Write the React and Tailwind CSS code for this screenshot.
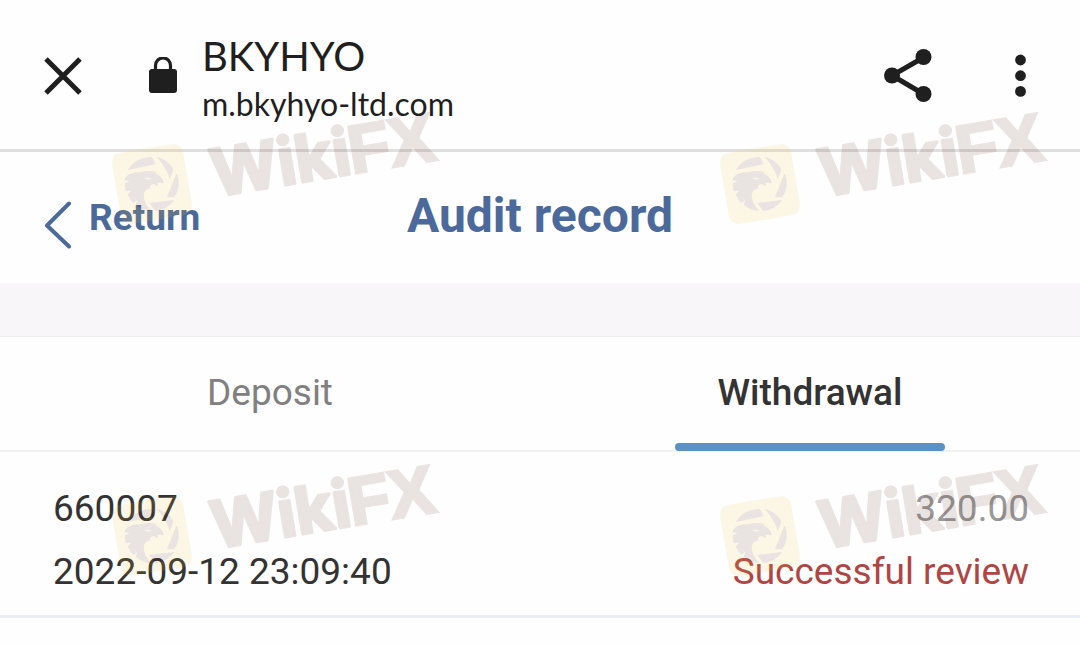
import React, { useState } from "react";

const tabs = [
  { id: "deposit", label: "Deposit" },
  { id: "withdrawal", label: "Withdrawal" },
];

const records = [
  {
    id: "660007",
    time: "2022-09-12 23:09:40",
    amount: "320.00",
    status: "Successful review",
  },
];

const stamps = [
  { x: 152, y: 184 },
  { x: 760, y: 184 },
  { x: 152, y: 536 },
  { x: 760, y: 536 },
];

const CloseIcon = () => (
  <svg viewBox="0 0 38 38" className="h-[38px] w-[38px]" fill="none" stroke="#1f1f1f" strokeWidth="5">
    <path d="M2 2 36 36M36 2 2 36" />
  </svg>
);

const LockIcon = () => (
  <svg viewBox="0 0 30 38" className="h-[38px] w-[30px]">
    <rect x="1" y="12" width="28" height="24" rx="3" fill="#1f1f1f" />
    <path d="M7.500 14V8.500a7.500 7.500 0 0 1 15 0v5.500" fill="none" stroke="#1f1f1f" strokeWidth="3.200" />
  </svg>
);

const ShareIcon = () => (
  <svg viewBox="0 0 48 54" className="h-[54px] w-12" fill="#1f1f1f">
    <path d="M39.500 8.500 8 26.500l31.500 18.500" fill="none" stroke="#1f1f1f" strokeWidth="5" />
    <circle cx="39.500" cy="8" r="8" />
    <circle cx="8" cy="26.500" r="8" />
    <circle cx="39.500" cy="45" r="8" />
  </svg>
);

const MoreIcon = () => (
  <svg viewBox="0 0 12 44" className="h-11 w-3" fill="#1f1f1f">
    <circle cx="6.500" cy="6" r="5.400" />
    <circle cx="6.500" cy="21.700" r="5.400" />
    <circle cx="6.500" cy="37.400" r="5.400" />
  </svg>
);

const BackIcon = () => (
  <svg viewBox="0 0 28 48" className="h-12 w-7" fill="none" stroke="#4b6a9b" strokeWidth="4" strokeLinecap="round" strokeLinejoin="round">
    <path d="M25 2.500 3 24.500l22 21" />
  </svg>
);

// Badge + name, drawn around the centre of the badge
const Stamp = ({ x, y }) => (
  <g transform={`translate(${x} ${y})`} opacity="0.12">
    <g transform="rotate(-9.5)">
      <rect x="-36" y="-36" width="72" height="72" rx="10" fill="#f4bf38" />
      <text
        x="60"
        y="23"
        fontFamily="Inter, sans-serif"
        fontWeight="700"
        fontSize="65"
        fill="#58261e"
        stroke="#58261e"
        strokeWidth="3"
        strokeLinejoin="round"
      >
        Wiki
      </text>
      <text
        x="199"
        y="23"
        fontFamily="Liberation Sans, sans-serif"
        fontWeight="700"
        fontSize="68"
        fill="#58261e"
        stroke="#58261e"
        strokeWidth="3"
      >
        FX
      </text>
    </g>
    <g transform="scale(0.3333) translate(-180 -252)" fill="#58261e">
      <path d="M108 210Q130 172 180 171L190 193Z" />
      <path d="M194 171Q228 178 244 208L234 237Q222 202 194 171Z" />
      <path d="M254 220Q270 256 248 290L225 292Z" />
      <path d="M247 300Q226 329 190 333L172 309Z" />
      <path d="M105 227Q122 214 146 217Q166 210 190 215L194 222Q212 230 215 250Q207 247 198 249L196 259L186 252Q168 256 176 264Q158 266 155 284Q154 308 178 333Q150 331 132 314L136 300L124 308Q112 298 107 284L117 272L101 274Q98 262 99 250L113 243L98 241Q98 234 105 227Z" />
      <path d="M155 232l24 3q-10 9-24-3Z" fill="#f4bf38" />
    </g>
  </g>
);

const App = () => {
  const [activeTab, setActiveTab] = useState("withdrawal");

  return (
    <div className="relative min-h-screen bg-[#fefefe] font-[Roboto,sans-serif] text-[#333333]">
      {/* Browser bar */}
      <header className="flex h-[152px] items-center border-b-[3px] border-[#dfdfdf] pt-0.5 pr-[54px] pl-11 text-[#1f1f1f]">
        <button type="button" aria-label="Close">
          <CloseIcon />
        </button>
        <div className="ml-[66px]">
          <LockIcon />
        </div>
        <div className="ml-6 flex-1 pt-1.5 font-[Lato,sans-serif]">
          <p className="text-[40px] leading-[50px]">BKYHYO</p>
          <p className="text-[32px] leading-[46px]">m.bkyhyo-ltd.com</p>
        </div>
        <button type="button" aria-label="Share">
          <ShareIcon />
        </button>
        <button type="button" aria-label="More" className="ml-[82px]">
          <MoreIcon />
        </button>
      </header>

      {/* Page title */}
      <div className="grid h-[131px] grid-cols-[1fr_auto_1fr] items-center px-11 text-[#4b6a9b]">
        <button type="button" className="flex items-center gap-[17px] justify-self-start text-[37px] font-bold">
          <span className="pt-3.5">
            <BackIcon />
          </span>
          Return
        </button>
        <h1 className="pb-1 text-[48px] font-bold">Audit record</h1>
      </div>

      <div className="h-[54px] border-b border-[#eeeeee] bg-[#f8f6f8]" />

      {/* Tabs */}
      <div role="tablist" className="flex h-[115px] border-b-2 border-[#f0f1f2]">
        {tabs.map((tab) => {
          const isActive = activeTab === tab.id;
          return (
            <button
              key={tab.id}
              type="button"
              role="tab"
              aria-selected={isActive}
              onClick={() => setActiveTab(tab.id)}
              className={`-mb-px flex flex-1 flex-col items-center text-[37px] ${
                isActive ? "font-medium text-[#333333]" : "text-[#808080]"
              }`}
            >
              <span className="flex flex-1 items-center pt-1.5">{tab.label}</span>
              <span className={`h-2 w-1/2 rounded-full ${isActive ? "bg-[#5b92c6]" : ""}`} />
            </button>
          );
        })}
      </div>

      {/* Records */}
      <ul>
        {records.map((record) => (
          <li
            key={record.id}
            className="flex justify-between border-b-[3px] border-[#ebeff2] pt-[25px] pr-[51px] pb-3 pl-[53px] text-[37px] leading-[63px]"
          >
            <div>
              <p>{record.id}</p>
              <p>{record.time}</p>
            </div>
            <div className="text-right">
              <p className="text-[#999999]">{record.amount}</p>
              <p className="text-[#b04543]">{record.status}</p>
            </div>
          </li>
        ))}
      </ul>

      <svg className="pointer-events-none absolute inset-0 h-full w-full" aria-hidden="true">
        {stamps.map((stamp) => (
          <Stamp key={`${stamp.x}-${stamp.y}`} x={stamp.x} y={stamp.y} />
        ))}
      </svg>
    </div>
  );
};

export default App;
